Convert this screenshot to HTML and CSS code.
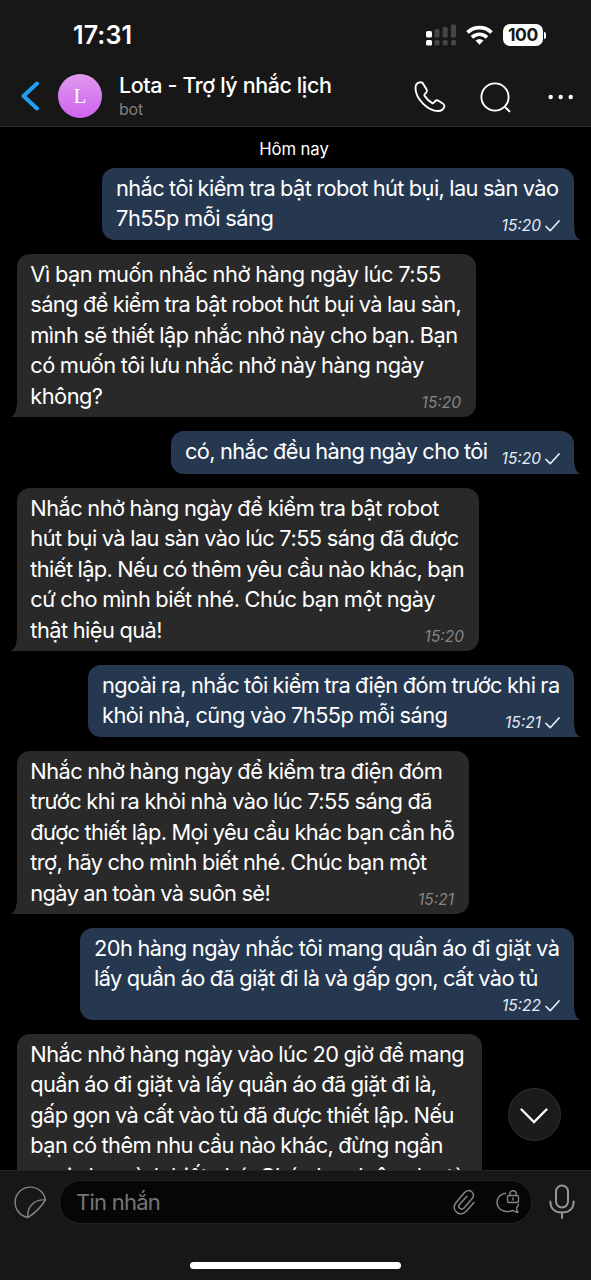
FILE: index.html
```html
<!DOCTYPE html>
<html lang="vi">
<head>
<meta charset="utf-8">
<title>Lota - Trợ lý nhắc lịch</title>
<link rel="stylesheet" href="styles.css">
</head>
<body>
<div class="phone">
  <header class="top">
    <div class="status">
      <span class="clock">17:31</span>
      <svg class="signal" width="31" height="22" viewBox="0 0 31 22"><g fill="#fff"><rect x="0" y="7" width="6" height="6.500" rx="1.500"/><rect x="0" y="16" width="6" height="5.500" rx="1.500"/></g><g fill="#464646"><rect x="8.500" y="5" width="5" height="8.500" rx="1.500"/><rect x="16.700" y="3" width="5" height="10.500" rx="1.500"/><rect x="25" y="0.500" width="5" height="13" rx="1.500"/><rect x="8.500" y="16" width="5" height="5.500" rx="1.500"/><rect x="16.700" y="16" width="5" height="5.500" rx="1.500"/><rect x="25" y="16" width="5" height="5.500" rx="1.500"/></g></svg>
      <svg class="wifi" width="27" height="20" viewBox="0 0 27 20"><g fill="none" stroke="#fff" stroke-width="3.700"><path d="M1.500 7.500a17.300 17.300 0 0 1 24 0"/><path d="M6 12.300a10.800 10.800 0 0 1 15 0"/></g><path d="M13.500 19.700l-4-4.200a6 6 0 0 1 8 0z" fill="#fff"/></svg>
      <span class="battery">100</span><i class="nub"></i>
    </div>
    <div class="nav">
      <svg class="back" width="20" height="30" viewBox="0 0 20 30"><path d="M17 2.500L3.500 15 17 27.500" fill="none" stroke="#229ff3" stroke-width="4" stroke-linecap="round" stroke-linejoin="round"/></svg>
      <div class="avatar">L</div>
      <div class="who"><div class="name">Lota - Trợ lý nhắc lịch</div><div class="sub">bot</div></div>
      <svg class="call" width="32" height="32" viewBox="0 0 32 32"><path d="M7 1.200C3.500 1.200 1.500 3.500 1.500 7c0 11 12.500 23 22.500 23 3 0 5.500-1.500 6.300-4.500.3-1.300-.2-2-1.200-2.700l-4.600-3c-1.300-.8-2.300-.7-3.300.4l-1.400 1.500c-.6.600-1.200.7-1.900.2a24 24 0 0 1-7.300-7c-.5-.8-.4-1.400.3-2l1.300-1.200c1-1 1.200-2 .4-3.300l-3-5C9 1.900 8.300 1.200 7 1.200z" fill="none" stroke="#fff" stroke-width="1.900" stroke-linejoin="round"/></svg>
      <svg class="search" width="32" height="32" viewBox="0 0 32 32"><circle cx="15" cy="15" r="13.600" fill="none" stroke="#fff" stroke-width="1.900"/><path d="M25.800 25.800l3.600 3.600" stroke="#fff" stroke-width="2" stroke-linecap="round"/></svg>
      <svg class="more" width="26" height="6" viewBox="0 0 26 6" fill="#fff"><circle cx="2.700" cy="3" r="2.200"/><circle cx="12.700" cy="3" r="2.200"/><circle cx="22.700" cy="3" r="2.200"/></svg>
    </div>
  </header>

  <main class="chat">
    <div class="day">Hôm nay</div>
    <div class="msg out w1"><p><span class="tight">nhắc tôi kiểm tra bật robot hút bụi, lau sàn vào</span><br><span class="loose">7h55p mỗi sáng</span></p><span class="time">15:20<svg class="tick" width="15" height="12" viewBox="0 0 15 12"><path d="M1 6.500l4.200 4.200L14 1"/></svg></span></div>
    <div class="msg in w2"><p><span class="loose">Vì bạn muốn nhắc nhở hàng ngày lúc 7:55</span><br><span class="tight">sáng để kiểm tra bật robot hút bụi và lau sàn,</span><br>mình sẽ thiết lập nhắc nhở này cho bạn. Bạn<br>có muốn tôi lưu nhắc nhở này hàng ngày<br>không?</p><span class="time">15:20</span></div>
    <div class="msg out w3"><p><span class="tight">có, nhắc đều hàng ngày cho tôi</span></p><span class="time">15:20<svg class="tick" width="15" height="12" viewBox="0 0 15 12"><path d="M1 6.500l4.200 4.200L14 1"/></svg></span></div>
    <div class="msg in w4"><p>Nhắc nhở hàng ngày để kiểm tra bật robot<br>hút bụi và lau sàn vào lúc 7:55 sáng đã được<br><span class="tight">thiết lập. Nếu có thêm yêu cầu nào khác, bạn</span><br>cứ cho mình biết nhé. Chúc bạn một ngày<br>thật hiệu quả!</p><span class="time">15:20</span></div>
    <div class="msg out w5"><p><span class="tight">ngoài ra, nhắc tôi kiểm tra điện đóm trước khi ra</span><br>khỏi nhà, cũng vào 7h55p mỗi sáng</p><span class="time">15:21<svg class="tick" width="15" height="12" viewBox="0 0 15 12"><path d="M1 6.500l4.200 4.200L14 1"/></svg></span></div>
    <div class="msg in w6"><p>Nhắc nhở hàng ngày để kiểm tra điện đóm<br>trước khi ra khỏi nhà vào lúc 7:55 sáng đã<br><span class="tight">được thiết lập. Mọi yêu cầu khác bạn cần hỗ<br>trợ, hãy cho mình biết nhé. Chúc bạn một<br>ngày an toàn và suôn sẻ!</span></p><span class="time">15:21</span></div>
    <div class="msg out w7"><p>20h hàng ngày nhắc tôi mang quần áo đi giặt và<br><span class="tight">lấy quần áo đã giặt đi là và gấp gọn, cất vào tủ</span></p><span class="time">15:22<svg class="tick" width="15" height="12" viewBox="0 0 15 12"><path d="M1 6.500l4.200 4.200L14 1"/></svg></span></div>
    <div class="msg in w8"><p>Nhắc nhở hàng ngày vào lúc 20 giờ để mang<br><span class="tight">quần áo đi giặt và lấy quần áo đã giặt đi là,<br>gấp gọn và cất vào tủ đã được thiết lập. Nếu<br>bạn có thêm nhu cầu nào khác, đừng ngần<br>ngại cho mình biết nhé. Chúc bạn luôn chu tà</span></p></div>
    <div class="down"><svg width="28" height="16" viewBox="0 0 28 16"><path d="M1.500 1.500L14 14 26.500 1.500" fill="none" stroke="#fff" stroke-width="2.300" stroke-linecap="round"/></svg></div>
  </main>

  <footer class="bottom">
    <div class="bar">
      <svg class="sticker" width="33" height="33" viewBox="0 0 33 33" fill="none" stroke="#858585" stroke-width="1.400" stroke-linejoin="round"><path d="M14 31.500A15.300 15.300 0 1 1 31.500 14C27 21 21 27 14 31.500C12.500 21 20 13 31.500 14"/></svg>
      <div class="field"><span class="ph">Tin nhắn</span>
        <svg class="clip" width="23" height="26" viewBox="0 0 23 26" fill="none" stroke="#858585" stroke-width="1.500" stroke-linecap="round"><path d="M21 13.500l-7.500 8.600c-3 3.300-7 3.500-10 1s-3-6.500-.4-9.600L11.500 3.600c2-2.300 5-2.700 7.200-.8s2.200 4.700.3 7l-8 9.200c-1.200 1.300-2.900 1.400-4.200.4-1.200-1.100-1.300-2.800-.1-4.200L14 7.200"/></svg>
        <svg class="secret" width="24" height="24" viewBox="0 0 24 24" fill="none" stroke="#858585" stroke-width="1.400" stroke-linecap="round" stroke-linejoin="round"><path d="M9.500 3.200C4 4 1 8 1 12.300c0 5.700 4.600 9.300 10.200 9.300 2 0 3.800-.5 5.300-1.300 1.600 1.300 3.500 2.200 5.500 1.900-1.200-1.400-1.600-2.700-1.400-4.400 1-1.200 1.500-2 1.800-3.300"/><rect x="11.500" y="5.500" width="11" height="7" rx="1.500"/><path d="M13.700 5.300V4a3.300 3.300 0 0 1 6.600 0v1.300M17 8v2"/></svg>
      </div>
      <svg class="mic" width="26" height="36" viewBox="0 0 26 36" fill="none" stroke="#969696" stroke-width="2" stroke-linecap="round"><rect x="7" y="1.500" width="12" height="22" rx="6"/><path d="M1.300 17.500c0 7.300 5 11 11.700 11s11.700-3.700 11.700-11M13 28.500v5.500"/></svg>
    </div>
    <div class="home"></div>
  </footer>
</div>
</body>
</html>
```
FILE: styles.css
```css
* { box-sizing: border-box; }
body { margin: 0; background: #000; }
svg { display: block; flex: none; }
.phone { width: 591px; height: 1280px; display: flex; flex-direction: column; overflow: hidden; background: #000; color: #fff; font-family: Inter, "Noto Sans", sans-serif; }
.top { flex: none; height: 127px; background: #171717; border-bottom: 1px solid #2b2b2b; }
.status { display: flex; align-items: center; height: 70px; padding-left: 73px; }
.clock { width: 353px; font-size: 25px; font-weight: 600; letter-spacing: 0.1px; }
.wifi { margin-left: 9px; }
.battery { margin-left: 10px; width: 40px; height: 22px; border-radius: 7px; background: #fff; color: #171717; font-size: 17.500px; font-weight: 700; line-height: 22px; text-align: center; letter-spacing: -0.3px; }
.nub { width: 2px; height: 7px; margin-left: 1px; border-radius: 0 3px 3px 0; background: #fff; }
.nav { display: flex; align-items: center; height: 52px; padding-left: 20px; }
.avatar { flex: none; margin-left: 18px; width: 44px; height: 44px; border-radius: 50%; background: linear-gradient(#df99ee, #cf63ed); font: 21px/44px "Liberation Serif", serif; text-align: center; }
.who { flex: none; width: 259px; margin-left: 17px; padding-bottom: 3px; }
.name { font-size: 21.500px; font-weight: 500; line-height: 28px; letter-spacing: -0.400px; white-space: nowrap; }
.sub { font-size: 16px; line-height: 20px; color: #808080; letter-spacing: -0.2px; }
.call { margin: 2px 0 0 36px; }
.search { margin: 3px 0 0 34px; }
.more { margin: 1px 0 0 36px; }
.chat { position: relative; flex: 1; min-height: 0; overflow: hidden; display: flex; flex-direction: column; align-items: flex-start; gap: 14px; padding: 11px 17px 0; }
.day { align-self: center; width: 100%; height: 16px; padding-right: 3px; line-height: 22px; text-align: center; font-size: 16.700px; letter-spacing: -0.1px; }
.msg { position: relative; flex: none; height: 163px; padding: 5px 14px; border-radius: 13px; background: #292929; }
.msg p { margin: 0; font-size: 21.800px; line-height: 30.400px; letter-spacing: -0.530px; word-spacing: -0.500px; white-space: nowrap; }
.tight { letter-spacing: -0.600px; }
.loose { letter-spacing: -0.450px; }
.out { align-self: flex-end; background: #263850; }
.in { padding-left: 13.300px; border-bottom-left-radius: 0; }
.out { border-bottom-right-radius: 0; }
.msg::after { content: ""; position: absolute; bottom: 0; width: 6px; height: 13px; }
.in::after { left: -6px; background: radial-gradient(ellipse 6px 13px at 0 0, transparent 90%, #292929 100%); }
.out::after { right: -6px; background: radial-gradient(ellipse 6px 13px at 100% 0, transparent 90%, #263850 100%); }
.time { position: absolute; right: 15px; bottom: 5px; display: flex; align-items: center; gap: 4px; font-size: 15.500px; line-height: 18px; font-style: italic; color: #858585; }
.out .time { right: 14px; color: #e4edf7; }
.tick { fill: none; stroke: currentColor; stroke-width: 1.700; stroke-linecap: round; stroke-linejoin: round; }
.w1 { width: 472px; height: 72px; }
.w2 { width: 459px; }
.w3 { width: 403px; height: 43px; }
.w3 .time { bottom: 6px; }
.w4 { width: 462px; }
.w5 { width: 486px; height: 72px; }
.w6 { width: 452px; }
.w7 { width: 494px; height: 92px; }
.w8 { width: 465px; }
.down { position: absolute; right: 30px; bottom: 29px; width: 53px; height: 53px; border-radius: 50%; border: 1px solid #303030; background: #1b1b1b; display: flex; align-items: center; justify-content: center; padding-top: 2px; padding-right: 2px; }
.bottom { flex: none; height: 110px; background: #171717; border-top: 1px solid #242424; }
.bar { display: flex; align-items: center; height: 62px; padding-left: 14px; }
.field { display: flex; align-items: center; width: 473px; height: 44px; margin-left: 12px; padding-left: 16px; border: 1px solid #222; border-radius: 22px; background: #060606; }
.ph { width: 377px; font-size: 22px; color: #767676; letter-spacing: -0.750px; }
.secret { margin-left: 20px; }
.mic { margin-left: 17px; }
.home { width: 211px; height: 7px; margin: 29px 0 0 190px; border-radius: 4px; background: #fff; }
```
